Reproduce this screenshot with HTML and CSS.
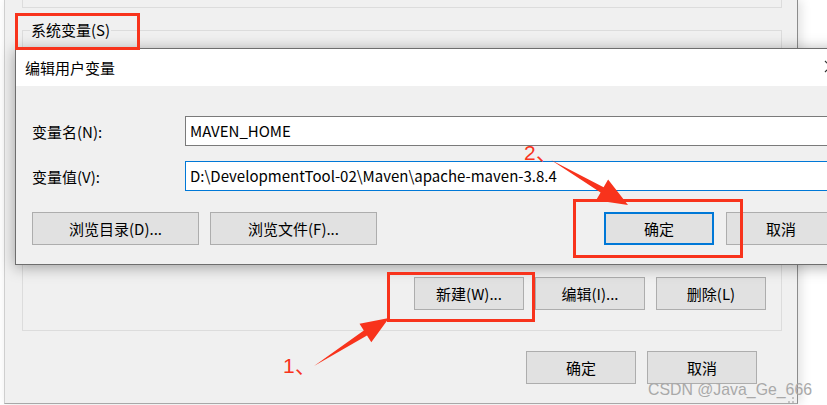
FILE: index.html
```html
<!DOCTYPE html>
<html lang="zh-CN">
<head>
  <meta charset="UTF-8">
  <title>编辑用户变量</title>
  <link rel="stylesheet" href="styles.css">
</head>
<body>
  <div class="window">
    <div class="group group-top"></div>

    <div class="group group-sys">
      <span class="group-title">系统变量(S)</span>
      <div class="btn-row">
        <button class="btn">新建(W)...</button>
        <button class="btn">编辑(I)...</button>
        <button class="btn">删除(L)</button>
      </div>
    </div>

    <div class="btn-row footer">
      <button class="btn">确定</button>
      <button class="btn">取消</button>
    </div>
  </div>

  <!-- dialog on top of the env window -->
  <div class="dialog">
    <div class="dialog-title">编辑用户变量</div>
    <div class="dialog-body">
      <div class="field">
        <label class="field-label">变量名(N):</label>
        <div class="input">MAVEN_HOME</div>
      </div>
      <div class="field">
        <label class="field-label">变量值(V):</label>
        <div class="input focus">D:\DevelopmentTool-02\Maven\apache-maven-3.8.4</div>
      </div>
      <div class="dialog-btns">
        <button class="btn wide">浏览目录(D)...</button>
        <button class="btn wide">浏览文件(F)...</button>
        <div class="spacer"></div>
        <button class="btn default">确定</button>
        <button class="btn">取消</button>
      </div>
    </div>
  </div>

  <svg class="marks" width="827" height="405" viewBox="0 0 827 405">
    <!-- close button glyph of the dialog, mostly cut off -->
    <path d="M825 61 L836 72 M836 61 L825 72" stroke="#333" stroke-width="1.2"/>

    <rect x="16.5" y="14.5" width="122" height="34" fill="none" stroke="#f8331c" stroke-width="3"/>
    <rect x="574.5" y="200.5" width="167" height="56" fill="none" stroke="#f8331c" stroke-width="3"/>
    <rect x="388.5" y="273.5" width="145" height="47" fill="none" stroke="#f8331c" stroke-width="3"/>

    <polygon fill="#f8331c" points="314,366 363.8,330.5 359.5,323.7 389,318 371.3,342.3 367,335.5"/>
    <polygon fill="#f8331c" points="551,160 603.6,187.3 608.1,179.5 628,205 596.1,200.3 600.6,192.5"/>

    <text x="283" y="373" class="step">1、</text>
    <text x="524" y="160" class="step">2、</text>

    <g fill="#c4c4c4">
      <rect x="792" y="397" width="2" height="2"/>
      <rect x="788" y="401" width="2" height="2"/>
      <rect x="792" y="401" width="2" height="2"/>
    </g>
    <text x="648" y="395" class="mark" textLength="164" lengthAdjust="spacingAndGlyphs">CSDN @Java_Ge_666</text>
  </svg>
</body>
</html>
```

FILE: styles.css
```css
* { box-sizing: border-box; }
body {
  margin: 0;
  width: 827px;
  height: 405px;
  overflow: hidden;
  position: relative;
  background: #fff;
  font-family: "Noto Sans CJK SC", "Noto Sans", sans-serif;
  font-size: 15px;
  color: #000;
}
.window {
  margin-left: 4px;
  width: 794px;
  height: 404px;
  background: #f0f0f0;
  border-left: 1px solid #cfcfcf;
  border-right: 1px solid #8c8c8c;
  border-bottom: 1px solid #a8a8a8;
  box-shadow: 3px 0 10px rgba(0,0,0,0.12);
  display: flex;
  flex-direction: column;
}
.group {
  margin-left: 17px;
  width: 760px;
  border: 1px solid #dcdcdc;
}
.group-top {
  height: 8px;
  border-top: none;
}
.group-sys {
  margin-top: 22px;
  height: 301px;
  display: flex;
  flex-direction: column;
  justify-content: space-between;
  padding: 0 15px 20px 0;
}
.group-title {
  align-self: flex-start;
  margin: -11px 0 0 7px;
  padding: 0 1px;
  line-height: 20px;
  background: #f0f0f0;
}
.btn-row {
  display: flex;
  justify-content: flex-end;
  gap: 11px;
}
.footer {
  margin-top: 20px;
  padding-right: 40px;
}
.btn {
  width: 110px;
  height: 33px;
  padding: 0;
  font: inherit;
  color: #000;
  background: #e1e1e1;
  border: 1px solid #adadad;
}
.btn.wide { width: 167px; }
.btn.default {
  border: 2px solid #0078d7;
}

.dialog {
  position: absolute;
  left: 15px;
  top: 48px;
  width: 832px;
  height: 217px;
  background: #f0f0f0;
  border: 1px solid #6e6e6e;
  box-shadow: 0 2px 14px rgba(0,0,0,0.35);
}
.dialog-title {
  height: 37px;
  line-height: 37px;
  padding-left: 9px;
  background: #fff;
}
.dialog-body {
  padding: 30px 10px 0 16px;
  display: flex;
  flex-direction: column;
}
.field {
  display: flex;
  align-items: center;
  margin-bottom: 15px;
}
.field-label {
  width: 153px;
}
.input {
  flex: 1;
  height: 30px;
  line-height: 28px;
  padding-left: 4px;
  background: #fff;
  border: 1px solid #7a7a7a;
  white-space: nowrap;
  overflow: hidden;
}
.input.focus { border-color: #0078d7; }
.dialog-btns {
  display: flex;
  gap: 11px;
  margin-top: 6px;
}
.dialog-btns .btn.default + .btn { margin-left: 1px; }
.spacer { flex: 1; }

.marks {
  position: absolute;
  left: 0;
  top: 0;
  pointer-events: none;
}
.step {
  font-family: "Liberation Sans", sans-serif;
  font-size: 21px;
  fill: #f8331c;
}
.mark {
  font-family: "Liberation Sans", sans-serif;
  font-size: 17px;
  fill: #a9a9a9;
}
```
